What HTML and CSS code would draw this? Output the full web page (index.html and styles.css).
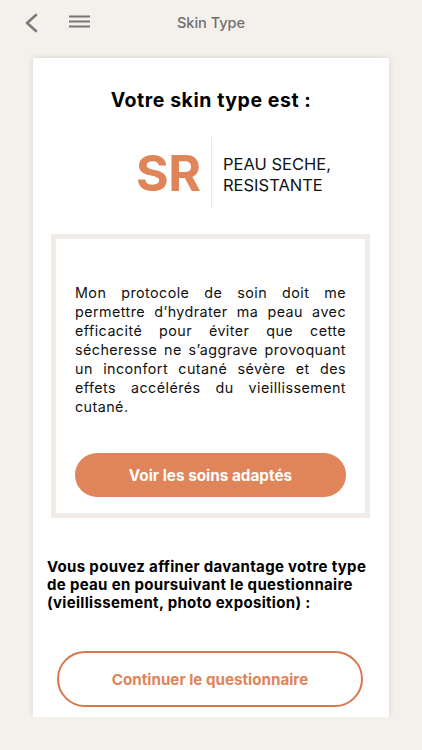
FILE: index.html
```html
<!DOCTYPE html>
<html lang="fr">
<head>
    <meta charset="UTF-8">
    <meta name="viewport" content="width=device-width, initial-scale=1.0">
    <title>Skin Type</title>
    <link rel="stylesheet" href="styles.css">
</head>
<body>
    <header class="topbar">
        <button class="icon-btn back" aria-label="Retour">
            <svg width="14" height="20" viewBox="0 0 14 20"><path d="M12 2 L3 10 L12 18" fill="none" stroke="#7a7a7a" stroke-width="2.6" stroke-linecap="round" stroke-linejoin="round"/></svg>
        </button>
        <button class="icon-btn menu" aria-label="Menu">
            <svg width="21" height="14" viewBox="0 0 21 14"><path d="M0 1.5 H21 M0 6.5 H21 M0 11.5 H21" stroke="#767676" stroke-width="2"/></svg>
        </button>
        <div class="topbar-title">Skin Type</div>
    </header>

    <main class="card">
        <h1>Votre skin type est :</h1>

        <div class="type-row">
            <div class="type-code">SR</div>
            <div class="type-label">PEAU SECHE,<br>RESISTANTE</div>
        </div>

        <div class="protocol">
            <p class="protocol-text">Mon protocole de soin doit me permettre d’hydrater ma peau avec efficacité pour éviter que cette sécheresse ne s’aggrave provoquant un inconfort cutané sévère et des effets accélérés du vieillissement cutané.</p>
            <button class="btn-filled">Voir les soins adaptés</button>
        </div>

        <p class="refine">Vous pouvez affiner davantage votre type de peau en poursuivant le questionnaire (vieillissement, photo exposition) :</p>

        <button class="btn-outline">Continuer le questionnaire</button>
    </main>
</body>
</html>
```

FILE: styles.css
```css
body {
    font-family: Inter, "Noto Sans", sans-serif;
    margin: 0;
    padding: 0;
    background-color: #f4f0eb;
    color: #000;
}
.topbar {
    position: relative;
    height: 46px;
    display: flex;
    align-items: center;
    padding-left: 24px;
}
.icon-btn {
    background: none;
    border: none;
    padding: 0;
    display: flex;
    cursor: pointer;
}
.back {
    margin-top: -1px;
}
.menu {
    margin-left: 31px;
    margin-top: -2px;
}
.topbar-title {
    position: absolute;
    left: 0;
    right: 0;
    top: 14px;
    text-align: center;
    font-size: 14.5px;
    font-weight: 500;
    color: #6f6f6f;
    pointer-events: none;
}
.card {
    margin: 12px 33px 0;
    padding: 30px 14px 10px;
    background-color: #fff;
    box-shadow: 0 0 6px rgba(0, 0, 0, 0.12);
    display: flex;
    flex-direction: column;
}
h1 {
    margin: 0;
    text-align: center;
    font-size: 19.5px;
    line-height: 24px;
    font-weight: 700;
    letter-spacing: 0.55px;
}
.type-row {
    margin: 25px 0 0 89px;
    display: flex;
    align-items: center;
    height: 72px;
}
.type-code {
    font-size: 50px;
    font-weight: 700;
    color: #e0845a;
    letter-spacing: -0.5px;
    width: 75px;
    height: 72px;
    line-height: 72px;
    border-right: 1px solid #ebe7e3;
}
.type-label {
    margin-left: 11px;
    font-size: 16.5px;
    line-height: 21px;
    color: #111;
    padding-top: 3px;
}
.protocol {
    margin: 25px 5px 0 4px;
    border: 5px solid #f3ece6;
    padding: 44px 19px 16px;
}
.protocol-text {
    margin: 0;
    font-size: 14.3px;
    line-height: 19px;
    letter-spacing: 0.45px;
    text-align: justify;
    color: #111;
}
.btn-filled {
    margin-top: 37px;
    width: 100%;
    height: 44px;
    border: none;
    border-radius: 22px;
    background-color: #e0845a;
    color: #fff;
    font-family: inherit;
    font-size: 15.3px;
    font-weight: 700;
    cursor: pointer;
}
.refine {
    margin: 40px 0 0;
    font-size: 15px;
    line-height: 18px;
    font-weight: 700;
    letter-spacing: 0.32px;
    color: #000;
}
.btn-outline {
    margin: 39px 12px 0 10px;
    height: 56px;
    border: 2px solid #d8774f;
    border-radius: 28px;
    background-color: #fff;
    color: #e0845a;
    font-family: inherit;
    font-size: 15.2px;
    font-weight: 700;
    cursor: pointer;
}
```
